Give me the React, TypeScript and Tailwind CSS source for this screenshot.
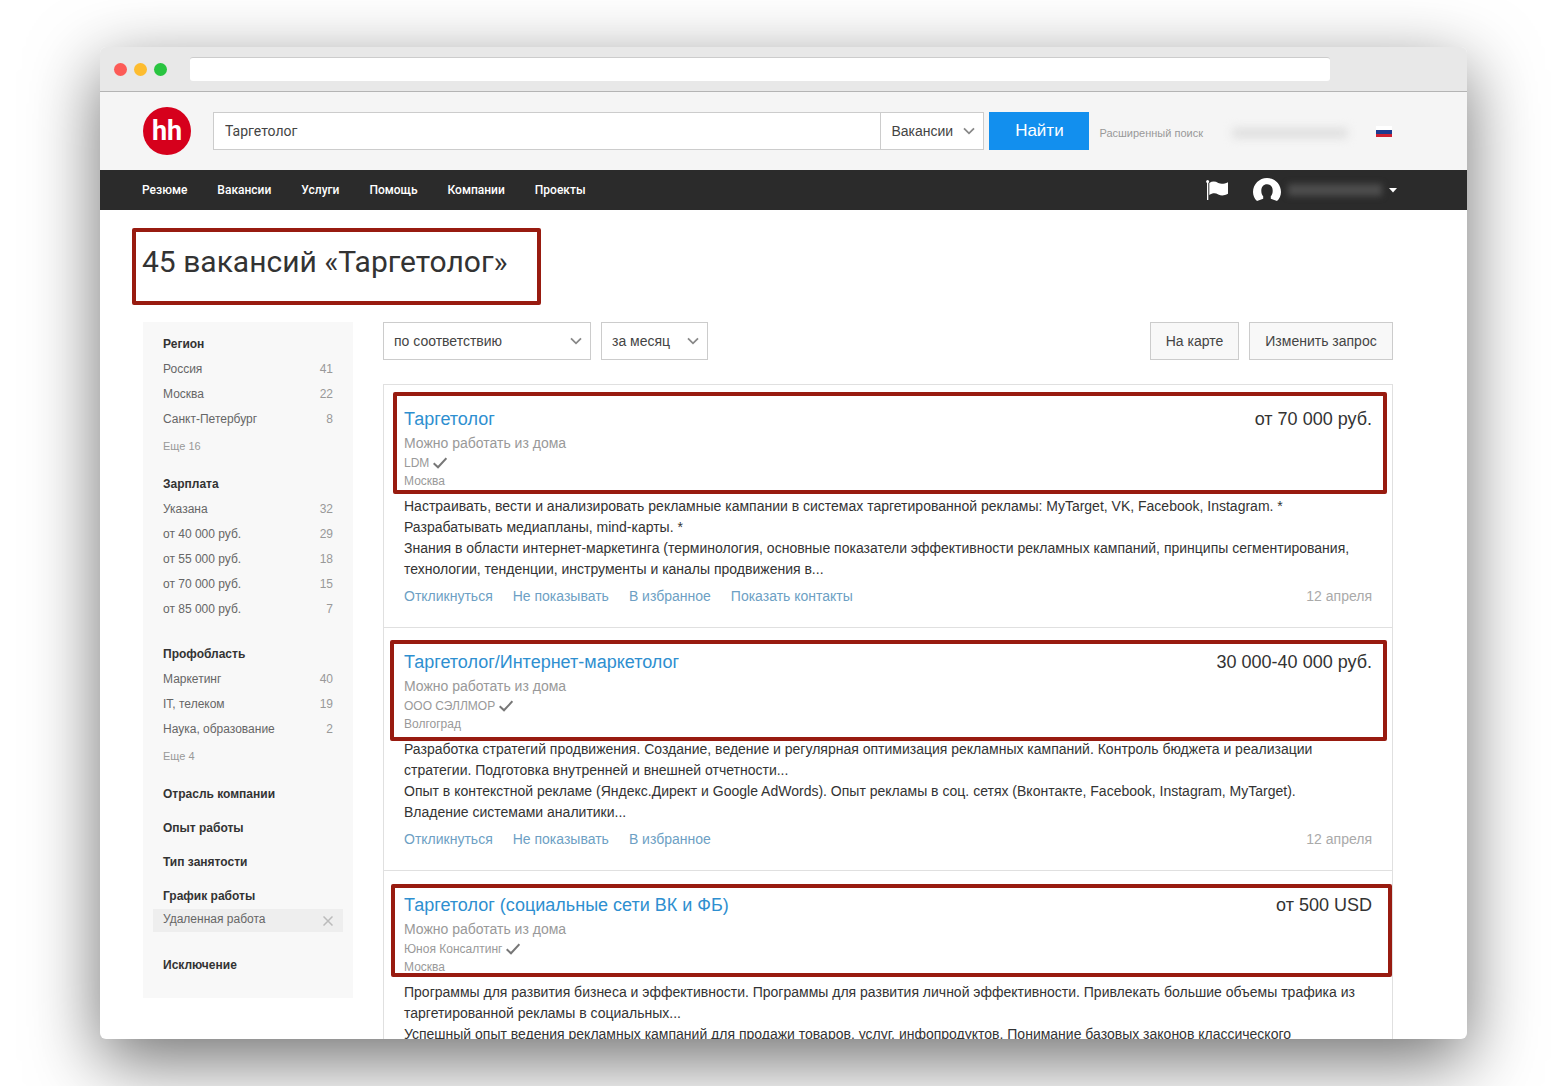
import { useState } from 'react'

interface Vacancy {
  title: string
  salary: string
  company: string
  city: string
  text: string[]
  actions: string[]
  date?: string
  mark: string
}

interface FilterGroup {
  title: string
  items?: [string, number][]
  more?: string
}

const nav = ['Резюме', 'Вакансии', 'Услуги', 'Помощь', 'Компании', 'Проекты']

const filters: FilterGroup[] = [
  { title: 'Регион', items: [['Россия', 41], ['Москва', 22], ['Санкт-Петербург', 8]], more: 'Еще 16' },
  {
    title: 'Зарплата',
    items: [
      ['Указана', 32],
      ['от 40 000 руб.', 29],
      ['от 55 000 руб.', 18],
      ['от 70 000 руб.', 15],
      ['от 85 000 руб.', 7],
    ],
  },
  { title: 'Профобласть', items: [['Маркетинг', 40], ['IT, телеком', 19], ['Наука, образование', 2]], more: 'Еще 4' },
  { title: 'Отрасль компании' },
  { title: 'Опыт работы' },
  { title: 'Тип занятости' },
]

const vacancies: Vacancy[] = [
  {
    title: 'Таргетолог',
    salary: 'от 70 000 руб.',
    company: 'LDM',
    city: 'Москва',
    text: [
      'Настраивать, вести и анализировать рекламные кампании в системах таргетированной рекламы: MyTarget, VK, Facebook, Instagram. * Разрабатывать медиапланы, mind-карты. *',
      'Знания в области интернет-маркетинга (терминология, основные показатели эффективности рекламных кампаний, принципы сегментирования, технологии, тенденции, инструменты и каналы продвижения в...',
    ],
    actions: ['Откликнуться', 'Не показывать', 'В избранное', 'Показать контакты'],
    date: '12 апреля',
    mark: 'left-[9px] right-[5px] top-[7px] h-[102px]',
  },
  {
    title: 'Таргетолог/Интернет-маркетолог',
    salary: '30 000-40 000 руб.',
    company: 'ООО СЭЛЛМОР',
    city: 'Волгоград',
    text: [
      'Разработка стратегий продвижения. Создание, ведение и регулярная оптимизация рекламных кампаний. Контроль бюджета и реализации стратегии. Подготовка внутренней и внешней отчетности...',
      'Опыт в контекстной рекламе (Яндекс.Директ и Google AdWords). Опыт рекламы в соц. сетях (Вконтакте, Facebook, Instagram, MyTarget). Владение системами аналитики...',
    ],
    actions: ['Откликнуться', 'Не показывать', 'В избранное'],
    date: '12 апреля',
    mark: 'left-[6px] right-[5px] top-[12px] h-[101px]',
  },
  {
    title: 'Таргетолог (социальные сети ВК и ФБ)',
    salary: 'от 500 USD',
    company: 'Юноя Консалтинг',
    city: 'Москва',
    text: [
      'Программы для развития бизнеса и эффективности. Программы для развития личной эффективности. Привлекать большие объемы трафика из таргетированной рекламы в социальных...',
      'Успешный опыт ведения рекламных кампаний для продажи товаров, услуг, инфопродуктов. Понимание базовых законов классического',
    ],
    actions: [],
    mark: 'left-[7px] right-0 top-[13px] h-[93px]',
  },
]

function Chevron() {
  return (
    <svg className="absolute right-2 top-1/2 -mt-1 h-2 w-3 pointer-events-none" viewBox="0 0 12 8" fill="none" stroke="#888" strokeWidth={1.8}>
      <path d="M1 1.3l5 5 5-5" />
    </svg>
  )
}

function Select({ label, options, className }: { label: string; options: string[]; className: string }) {
  return (
    <div className={`relative h-[38px] bg-white border border-[#ccc] ${className}`}>
      <select aria-label={label} className="h-full w-full appearance-none bg-transparent pl-[10px] pr-6 text-[14px] text-[#444] outline-none">
        {options.map((o) => (
          <option key={o}>{o}</option>
        ))}
      </select>
      <Chevron />
    </div>
  )
}

function Check() {
  return (
    <svg className="h-3 w-[14px]" viewBox="0 0 14 12" fill="none" stroke="#777" strokeWidth={2}>
      <path d="M.7 6.300l4.300 4L13.400 1.300" />
    </svg>
  )
}

function Header() {
  const [query, setQuery] = useState('Таргетолог')

  return (
    <header className="shrink-0">
      <div className="flex h-[78px] items-center bg-[#f5f5f5] pl-[43px] pr-[75px]">
        <a href="#" className="flex size-12 shrink-0 items-center justify-center rounded-full bg-[#d6001c] font-['Roboto',sans-serif] text-[27px] leading-none font-bold text-white">
          hh
        </a>
        <form className="ml-[22px] flex grow" onSubmit={(e) => e.preventDefault()}>
          <input
            aria-label="Поиск"
            value={query}
            onChange={(e) => setQuery(e.target.value)}
            className="h-[38px] min-w-0 grow border border-r-0 border-[#ccc] bg-white px-[11px] font-['Roboto',sans-serif] text-[14px] text-[#444] outline-none"
          />
          <Select label="Раздел" options={['Вакансии']} className="w-[104px] shrink-0" />
          <button className="ml-[5px] w-[100px] shrink-0 bg-[#128fee] text-[17px] text-white">Найти</button>
        </form>
        <a href="#" className="ml-[10px] mt-1 shrink-0 text-[11px] text-[#999]">
          Расширенный поиск
        </a>
        <span className="ml-[29px] mt-1 h-[10px] w-[116px] shrink-0 rounded bg-[#dedede] blur-[5px]" />
        <svg className="ml-7 h-[11px] w-4 shrink-0" viewBox="0 0 16 11">
          <path fill="#fff" d="M0 0h16v4H0z" />
          <path fill="#1d3a8f" d="M0 4h16v4H0z" />
          <path fill="#cf2030" d="M0 8h16v3H0z" />
        </svg>
      </div>

      <nav className="flex h-10 items-center bg-[#2b2b2b] pl-[42px] pr-[70px] font-['Roboto',sans-serif] text-[12px] font-medium text-white">
        <div className="flex gap-[30px]">
          {nav.map((n) => (
            <a key={n} href="#">{n}</a>
          ))}
        </div>
        <svg className="ml-auto h-5 w-[22px]" viewBox="0 0 22 20" fill="#fff">
          <circle cx="1.600" cy="1.500" r="1.500" />
          <path d="M1 2h1.300v18H1z" />
          <path d="M3.300 3c3-2 6-1.800 9 0 3 1.400 6 .8 9.700-.8v11.600c-3.700 1.900-6.700 2.200-9.700.6-3-1.500-6-1.400-9 .6z" />
        </svg>
        <svg className="ml-[25px] h-6 w-7" viewBox="0 0 28 24" fill="#fff">
          <path d="M4 23C1.500 20.800 0 17.500 0 14 0 6.300 6.300 0 14 0s14 6.300 14 14c0 3.500-1.500 6.800-4 9l-6.200-2.200v-2.500c1.200-1.400 1.900-3.300 1.900-5.600 0-3.900-2.300-6.400-5.700-6.400s-5.700 2.500-5.700 6.400c0 2.300.7 4.200 1.900 5.600v2.500z" />
        </svg>
        <span className="ml-[7px] h-3 w-[94px] bg-[#4d4d4d] blur-[3px]" />
        <svg className="ml-[7px] h-[5px] w-2" viewBox="0 0 8 5" fill="#fff">
          <path d="M0 0h8L4 4.500z" />
        </svg>
      </nav>
    </header>
  )
}

function Sidebar() {
  return (
    <aside className="w-[210px] shrink-0 self-start bg-[#f8f8f8] px-5 pt-3 pb-[23px] text-[12px] leading-5 text-[#666]">
      {filters.map((g) => (
        <section key={g.title} className={g.more ? 'pb-[18px]' : g.items ? 'pb-[22px]' : 'pb-[14px]'}>
          <h3 className="font-bold text-[#333]">{g.title}</h3>
          {g.items && (
            <ul className="pt-[3px] leading-[25px]">
              {g.items.map(([name, count]) => (
                <li key={name} className="flex justify-between">
                  <a href="#">{name}</a>
                  <span className="text-[#999]">{count}</span>
                </li>
              ))}
            </ul>
          )}
          {g.more && <a href="#" className="mt-1 block text-[11px] text-[#999]">{g.more}</a>}
        </section>
      ))}
      <h3 className="font-bold text-[#333]">График работы</h3>
      <div className="-mx-[10px] mt-[3px] mb-[23px] flex h-[23px] justify-between bg-[#eee] px-[10px]">
        Удаленная работа
        <button aria-label="Убрать фильтр">
          <svg className="size-[10px]" viewBox="0 0 10 10" stroke="#bbb" strokeWidth={1.5}>
            <path d="M.5.5l9 9M9.500.5l-9 9" />
          </svg>
        </button>
      </div>
      <h3 className="font-bold text-[#333]">Исключение</h3>
    </aside>
  )
}

function VacancyCard({ v }: { v: Vacancy }) {
  return (
    <article className="relative border-b border-[#e0e0e0] px-5 pt-[21px] pb-[21px]">
      <div className={`absolute rounded-[2px] border-4 border-[#981b10] pointer-events-none ${v.mark}`} />
      <div className="flex justify-between text-[18px] leading-[26px]">
        <a href="#" className="text-[#2e8fd0]">{v.title}</a>
        <span className="text-[#333]">{v.salary}</span>
      </div>
      <p className="text-[14px] leading-[22px] text-[#999]">Можно работать из дома</p>
      <p className="flex items-center gap-1 text-[12px] leading-[18px] text-[#999]">
        <a href="#">{v.company}</a>
        <Check />
      </p>
      <p className="text-[12px] leading-[18px] text-[#999]">{v.city}</p>
      <div className="mt-[6px] pr-3 text-[14px] leading-[21px] text-[#333]">
        {v.text.map((t) => (
          <p key={t}>{t}</p>
        ))}
      </div>
      {v.actions.length > 0 && (
        <div className="mt-[6px] flex gap-5 text-[14px] leading-5 text-[#6d9fc4]">
          {v.actions.map((a) => (
            <button key={a}>{a}</button>
          ))}
          <span className="ml-auto text-[#aaa]">{v.date}</span>
        </div>
      )}
    </article>
  )
}

export default function App() {
  return (
    <div className="h-screen overflow-hidden bg-white px-[100px] py-[47px] font-['Liberation_Sans',Arial,sans-serif]">
      <div className="flex h-full flex-col overflow-hidden rounded-[6px] bg-white shadow-[0_22px_70px_rgba(0,0,0,0.56)]">
        {/* Browser bar */}
        <div className="flex h-[45px] shrink-0 items-center gap-[7px] border-b border-[#b4b4b4] bg-[#e8e8e8] pl-[14px] pr-[137px]">
          <span className="size-[13px] rounded-full bg-[#fc5b57]" />
          <span className="size-[13px] rounded-full bg-[#fdbc2f]" />
          <span className="size-[13px] rounded-full bg-[#29c440]" />
          <input aria-label="Адрес" className="ml-4 h-6 min-w-0 grow rounded-[3px] border-t border-[#ccc] bg-white px-2 outline-none" />
        </div>

        <Header />

        <main className="min-h-0 grow overflow-hidden pl-8 pr-[74px] pt-[18px]">
          <div className="flex h-[77px] w-[409px] rounded-[2px] border-4 border-[#981b10] pl-[6px] pt-[10px]">
            <h1 className="font-['Roboto',sans-serif] text-[30px] leading-10 whitespace-nowrap text-[#333]">45 вакансий «Таргетолог»</h1>
          </div>

          <div className="ml-[11px] mt-[17px] flex gap-[30px]">
            <Sidebar />
            <div className="min-w-0 grow">
              <div className="flex gap-[10px]">
                <Select label="Сортировка" options={['по соответствию']} className="w-[208px]" />
                <Select label="Период" options={['за месяц']} className="w-[107px]" />
                <button className="ml-auto w-[89px] border border-[#ccc] bg-[#f8f8f8] text-[14px] text-[#444]">На карте</button>
                <button className="w-[144px] border border-[#ccc] bg-[#f8f8f8] text-[14px] text-[#444]">Изменить запрос</button>
              </div>
              <div className="mt-6 border border-b-0 border-[#e0e0e0]">
                {vacancies.map((v) => (
                  <VacancyCard key={v.title} v={v} />
                ))}
              </div>
            </div>
          </div>
        </main>
      </div>
    </div>
  )
}
